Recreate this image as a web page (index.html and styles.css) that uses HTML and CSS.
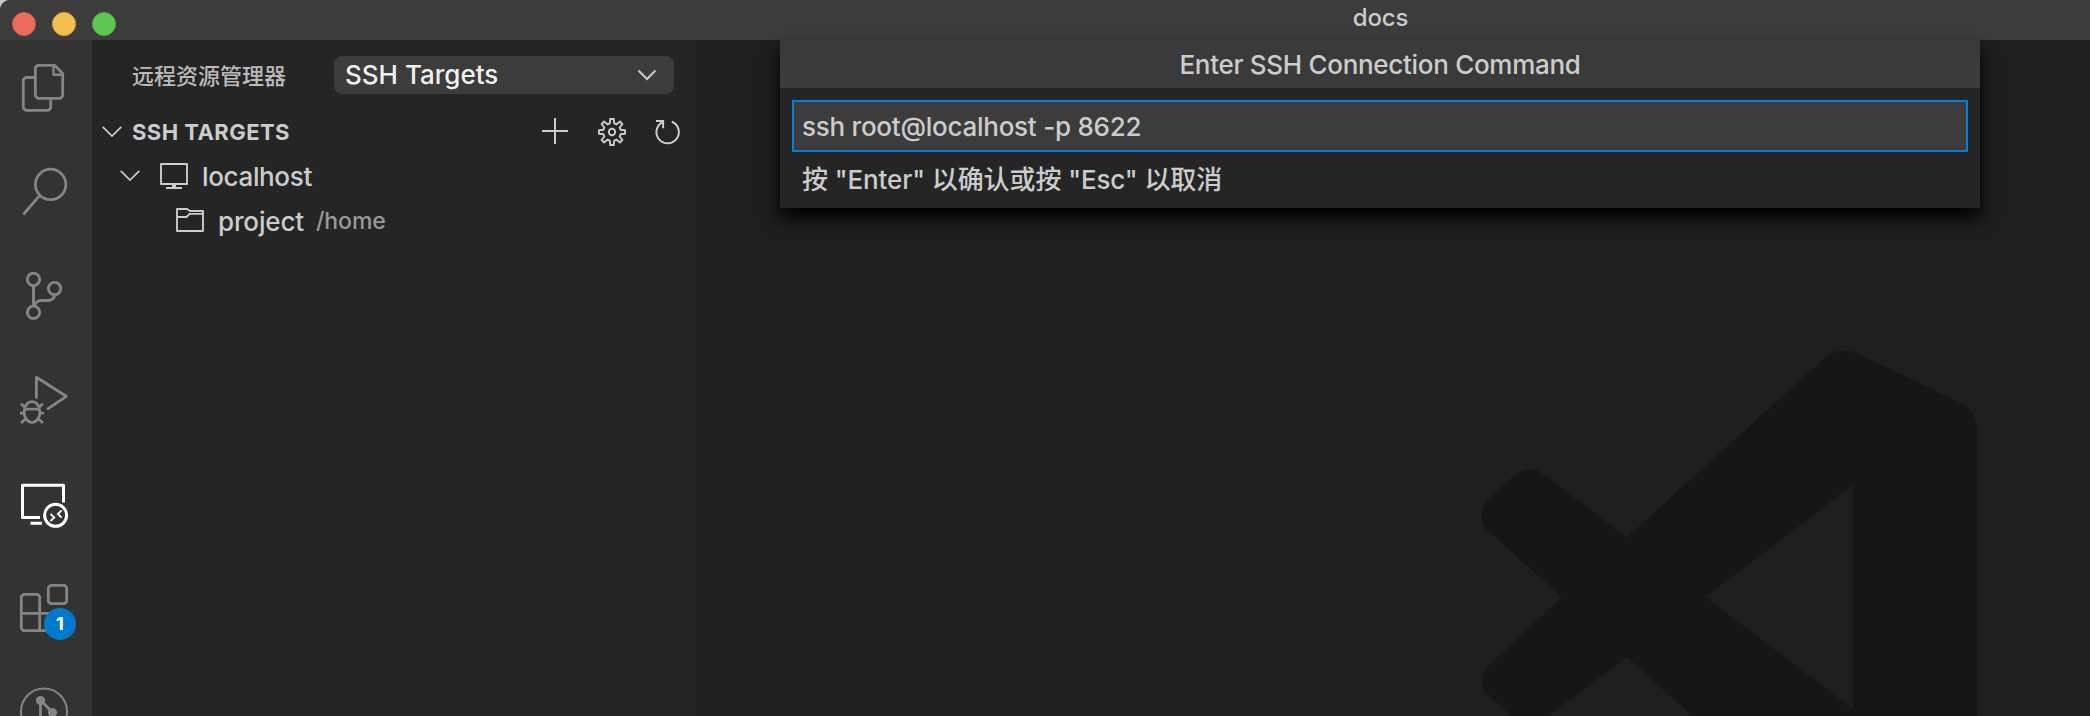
FILE: index.html
```html
<!DOCTYPE html>
<html lang="zh-CN">
<head>
<meta charset="utf-8">
<title>docs</title>
<link rel="stylesheet" href="styles.css">
</head>
<body>
<div class="window">
  <header class="titlebar">
    <div class="lights"><i class="light red"></i><i class="light yellow"></i><i class="light green"></i></div>
    <span class="title">docs</span>
  </header>
  <div class="workbench">
    <nav class="activitybar">
      <div class="activity"><svg viewBox="0 0 92 104" fill="none" stroke="#858585" stroke-width="2.8" stroke-linejoin="round"><path d="M35.5 37.5H25.5L23.3 39.7V68L25.5 70.3H48.5L50.7 68V59.5"/><path d="M37.7 25.3H54.5L62.7 33.5V56L60.5 58.3H37.7L35.4 56V27.5Z"/><path d="M53.5 25.5V34.7H62.5" stroke-width="2.4"/></svg></div>
      <div class="activity"><svg viewBox="0 0 92 104" fill="none" stroke="#858585" stroke-width="2.8"><circle cx="50.6" cy="40.4" r="15.2"/><path d="M39.8 51.3L23.3 70.5"/></svg></div>
      <div class="activity"><svg viewBox="0 0 92 104" fill="none" stroke="#858585" stroke-width="2.9"><circle cx="33.5" cy="31.4" r="6.2"/><circle cx="33.5" cy="64.3" r="6.2"/><circle cx="54.6" cy="40.6" r="6.2"/><path d="M33.5 37.5V58.2M34.3 58C35.5 54 38 52.500 41.5 52.500H47.5C51.5 52.500 54.3 50.2 54.8 46.8"/></svg></div>
      <div class="activity"><svg viewBox="0 0 92 104" fill="none" stroke="#858585" stroke-width="2.8"><path d="M36.4 46.5V25.3L66.3 44.3L47 57.3" stroke-linejoin="round"/><ellipse cx="32" cy="60" rx="7.9" ry="10.3"/><path d="M24 57.2H40M20 61.2H24.3M39.7 61.2H44M21.1 51.8L25.5 55.8M42.9 51.8L38.5 55.8M21.1 71L25.8 66.8M42.9 71L38.2 66.8"/></svg></div>
      <div class="activity"><svg viewBox="0 0 92 104" fill="none" stroke="#fff" stroke-width="3"><path d="M40 61.5H22.5V29.3H63.5V46.5M30.5 67.3H42" stroke-linejoin="round"/><circle cx="55.6" cy="59.3" r="11"/><path d="M50.5 57.8L54.2 61.5L50.5 65.2M61.6 54.3L57.9 58L61.6 61.7" stroke-width="1.9"/></svg></div>
      <div class="activity"><svg viewBox="0 0 92 104" fill="none" stroke="#858585" stroke-width="2.7" stroke-linejoin="round"><path d="M23.5 34.3H37.5L39.7 36.5V53.3H57.5L59.7 55.5V68.5L57.5 70.7H23.5L21.3 68.5V36.5ZM21.3 53.3H39.7V70.7"/><path d="M50.5 25.3H64.5L66.7 27.5V41.5L64.5 43.7H50.5L48.3 41.5V27.5Z"/></svg><span class="badge">1</span></div>
      <div class="activity"><svg viewBox="0 0 92 104" fill="none" stroke="#858585" stroke-width="2"><circle cx="44" cy="47.500" r="23"/><path d="M40.5 36V62M40.5 36L52.5 48.5" stroke-width="2.8"/><circle cx="40.5" cy="36.5" r="3.6" fill="#858585"/><circle cx="52.5" cy="48.5" r="3.6" fill="#858585"/></svg></div>
    </nav>
    <aside class="sidebar">
      <div class="sidebar-head">
        <span class="heading">远程资源管理器</span>
        <div class="select"><span>SSH Targets</span><svg width="20" height="12" viewBox="0 0 20 12" fill="none" stroke="#ccc" stroke-width="2"><path d="M1.5 1.5L10 10L18.5 1.5"/></svg></div>
      </div>
      <div class="section">
        <svg width="20" height="12" viewBox="0 0 20 12" fill="none" stroke="#ccc" stroke-width="1.7"><path d="M.7 .8L10 10L19.3 .8"/></svg>
        <span class="section-title">SSH TARGETS</span>
        <div class="actions">
          <svg width="28" height="28" viewBox="0 0 28 28" fill="none" stroke="#ccc" stroke-width="2"><path d="M0 13H26M13 0V26"/></svg>
          <svg width="28" height="28" viewBox="0 0 28 28" fill="none" stroke="#ccc" stroke-width="1.9"><path d="M11.8 5.4L12.3 1H15.7L16.2 5.4L18.5 6.3L22 3.6L24.4 6L21.7 9.5L22.6 11.8L27 12.3V15.7L22.6 16.2L21.7 18.5L24.4 22L22 24.4L18.5 21.7L16.2 22.6L15.7 27H12.3L11.8 22.6L9.5 21.7L6 24.4L3.6 22L6.3 18.5L5.4 16.2L1 15.7V12.3L5.4 11.8L6.3 9.5L3.6 6L6 3.6L9.5 6.3Z"/><circle cx="14" cy="14" r="3.200"/></svg>
          <svg width="28" height="28" viewBox="0 0 28 28" fill="none" stroke="#ccc" stroke-width="2"><path d="M17.8 3.7A11.2 11.2 0 1 1 8.2 4.3M2 3H9.1V10.3"/></svg>
        </div>
      </div>
      <div class="row host">
        <svg width="20" height="12" viewBox="0 0 20 12" fill="none" stroke="#ccc" stroke-width="1.7"><path d="M.7 .8L10 10L19.3 .8"/></svg>
        <svg width="28" height="26" viewBox="0 0 28 26" fill="none" stroke="#ccc" stroke-width="1.9" stroke-linejoin="round"><path d="M1 1H27V21H1ZM6 25H22M14 21V25"/><path d="M12 23H16" stroke-width="3"/></svg>
        <span class="label">localhost</span>
      </div>
      <div class="row folder">
        <svg width="28" height="24" viewBox="0 0 28 24" fill="none" stroke="#ccc" stroke-width="1.9" stroke-linejoin="round"><path d="M1 1H11L14 3H27V23H1ZM1 9H10.5L13.5 5.9H27"/></svg>
        <span class="name">project</span><span class="path">/home</span>
      </div>
    </aside>
    <main class="editor">
      <svg class="watermark" viewBox="0 0 1394 676"><path fill="#161616" fill-rule="evenodd" d="M931 497.3L1127.6 319C1136 310 1149 308 1161.7 313.5L1264 362.5C1275 368 1281 378 1281 390V724C1281 736 1275 746 1264 751L1161.7 800.5C1149 806 1136 804 1127.6 795L931 616.7L847 680C838 687 827 687 819 679L791 654C784 647 784 635 791 627L866 557L791 490C784 483 784 469 791 460L819 435C827 427 838 427 847 434ZM1157 445L1009.5 557L1157 669Z"/></svg>
      <section class="quick-input">
        <h1 class="quick-title">Enter SSH Connection Command</h1>
        <div class="quick-body">
          <div class="input">ssh root@localhost -p 8622</div>
          <p class="hint">按 "Enter" 以确认或按 "Esc" 以取消</p>
        </div>
      </section>
    </main>
  </div>
</div>
</body>
</html>
```
FILE: styles.css
```css
* { box-sizing: border-box; }
body { margin: 0; background: #c9c9c9; color: #ccc; font: 450 26px Inter, "Noto Sans CJK SC", sans-serif; }
svg { display: block; flex: none; }
.window { width: 2090px; height: 716px; overflow: hidden; border-top-left-radius: 10px; background: #1e1e1e; display: flex; flex-direction: column; }
.titlebar { height: 40px; flex: none; background: #3c3c3c; display: grid; grid-template-columns: 672px 1417px; }
.lights { display: flex; gap: 16px; padding: 12px; }
.light { width: 24px; height: 24px; border-radius: 50%; border: 1px solid; }
.red { background: #ed6a5e; border-color: #d8564b; }
.yellow { background: #f5bf4f; border-color: #d9a440; }
.green { background: #61c554; border-color: #51ad43; }
.title { text-align: center; font-size: 24px; line-height: 36px; letter-spacing: -.1px; }
.workbench { flex: 1; min-height: 0; display: flex; }
.activitybar { width: 92px; flex: none; background: #333; overflow: hidden; }
.activity { height: 104px; position: relative; }
.activity svg { width: 92px; height: 104px; }
.badge { position: absolute; left: 44px; top: 48px; width: 32px; height: 32px; border-radius: 50%; background: #007acc; color: #fff; font-size: 18px; font-weight: 700; line-height: 32px; text-align: center; }
.sidebar { width: 604px; flex: none; background: #252526; }
.sidebar-head { height: 70px; padding: 16px 22px 0 40px; display: flex; justify-content: space-between; align-items: flex-start; }
.heading { font-size: 22px; line-height: 40px; color: #bbb; }
.select { width: 340px; height: 38px; border-radius: 8px; background: #3c3c3c; color: #f0f0f0; display: flex; align-items: center; justify-content: space-between; padding: 0 17px 1px 11px; }
.section { height: 44px; display: flex; align-items: center; padding: 0 14px 0 10px; gap: 10px; }
.section-title { font-size: 22px; font-weight: 700; letter-spacing: .45px; }
.actions { margin-left: auto; display: flex; gap: 28px; }
.row { height: 44px; display: flex; align-items: center; }
.host { padding-left: 28px; gap: 20px; }
.label { margin-left: -6px; letter-spacing: -.35px; }
.folder { padding-left: 84px; gap: 13px; }
.name { padding: 2px 0 0 1px; letter-spacing: -.15px; }
.path { padding-top: 2px; margin-left: -1px; font-size: 23px; color: #999; letter-spacing: -.1px; }
.editor { flex: 1; min-width: 0; position: relative; }
.watermark { width: 1394px; height: 676px; }
.quick-input { position: absolute; left: 84px; top: 0; width: 1200px; height: 168px; background: #252526; box-shadow: 0 10px 16px #000; }
.quick-title { margin: 0; height: 48px; background: #3a3a3a; font-size: 26px; font-weight: 450; line-height: 49px; text-align: center; letter-spacing: -.3px; }
.quick-body { padding: 12px; }
.input { height: 52px; border: 2px solid #007fd4; background: #3c3c3c; line-height: 50px; padding-left: 8px; letter-spacing: -.25px; }
.hint { margin: 0; padding-left: 10px; line-height: 55px; letter-spacing: -.1px; }
```
